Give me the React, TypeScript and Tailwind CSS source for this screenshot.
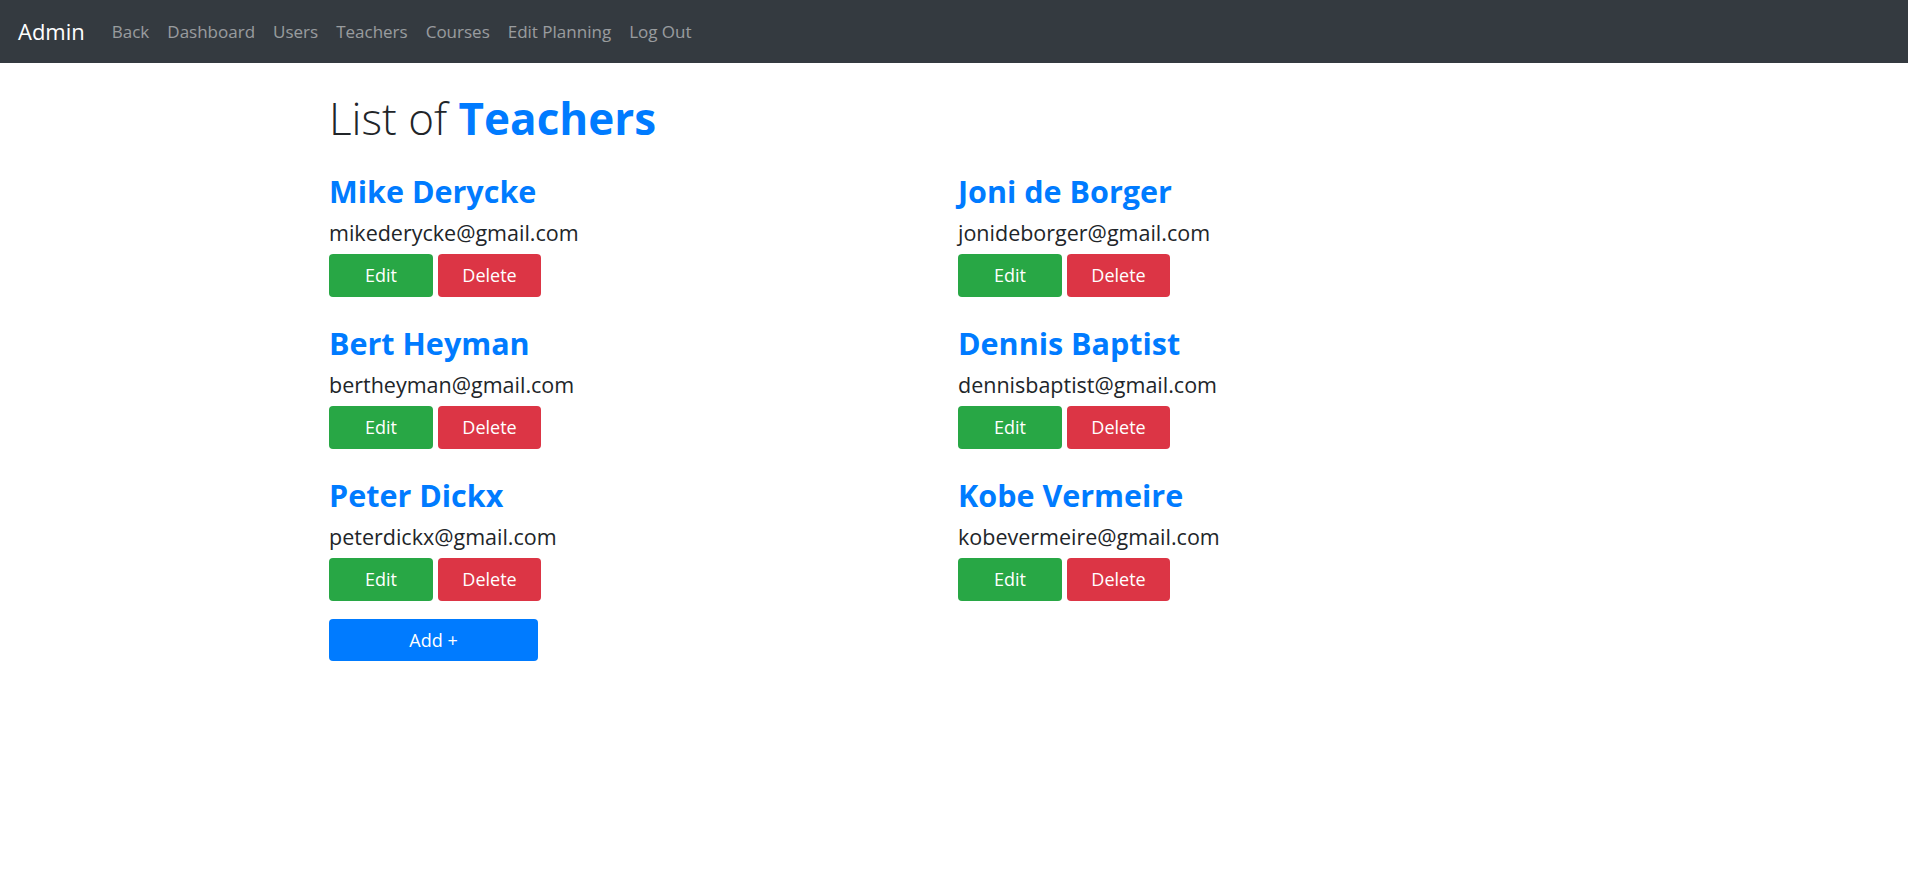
const links = ["Back", "Dashboard", "Users", "Teachers", "Courses", "Edit Planning", "Log Out"];

const teachers = [
  { name: "Mike Derycke", email: "mikederycke@gmail.com" },
  { name: "Joni de Borger", email: "jonideborger@gmail.com" },
  { name: "Bert Heyman", email: "bertheyman@gmail.com" },
  { name: "Dennis Baptist", email: "dennisbaptist@gmail.com" },
  { name: "Peter Dickx", email: "peterdickx@gmail.com" },
  { name: "Kobe Vermeire", email: "kobevermeire@gmail.com" },
];

function TeacherCard({ name, email }: { name: string; email: string }) {
  return (
    <div className="h-[152px]">
      <h2 className="mt-[1px] h-[44px] text-[30.5px] leading-[44px] font-bold text-[#007bff]">{name}</h2>
      <p className="mt-[5px] h-[30px] text-[21.5px] leading-[30px] text-[#212529]">{email}</p>
      <div className="mt-[6px] flex gap-[5px]">
        <button className="h-[43px] w-[104px] rounded-[4px] bg-[#28a745] text-[18px] text-white">Edit</button>
        <button className="h-[43px] w-[103px] rounded-[4px] bg-[#dc3545] text-[18px] text-white">Delete</button>
      </div>
    </div>
  );
}

export default function App() {
  return (
    <div className="min-h-screen bg-white font-['Open_Sans',sans-serif]">
      {/* Navbar */}
      <nav className="flex h-[63px] w-[1908px] items-center bg-[#343a40] px-[18px]">
        <span className="mr-[18px] text-[22px] text-white">Admin</span>
        <ul className="flex">
          {links.map((l) => (
            <li key={l} className="px-[9px] text-[17px] text-white/50">
              {l}
            </li>
          ))}
        </ul>
      </nav>

      <main className="pl-[329px] pt-[26px]">
        <h1 className="h-[58px] text-[44px] leading-[58px] text-[#212529]">
          <span className="font-light">List of </span>
          <span className="font-bold text-[#007bff]">Teachers</span>
        </h1>

        <div className="mt-[21px] grid grid-cols-[629px_629px]">
          {teachers.map((t) => (
            <TeacherCard key={t.name} name={t.name} email={t.email} />
          ))}
        </div>

        <button className="-mt-[5px] h-[42px] w-[209px] rounded-[4px] bg-[#007bff] text-[18px] text-white">Add +</button>
      </main>
    </div>
  );
}
